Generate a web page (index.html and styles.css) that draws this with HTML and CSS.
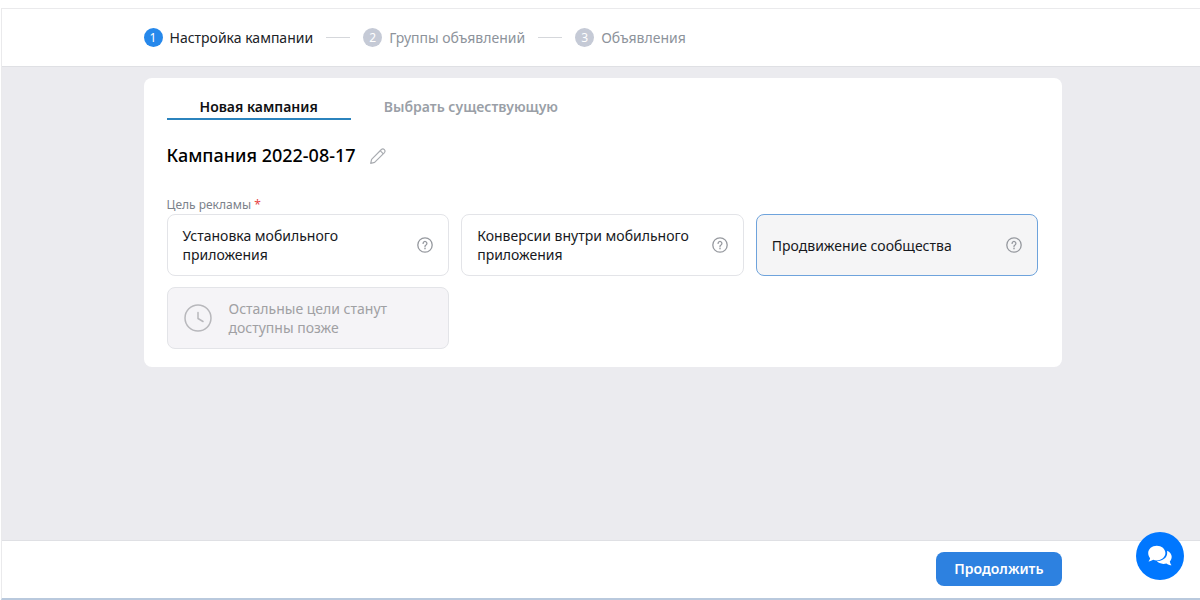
FILE: index.html
```
<!DOCTYPE html>
<html lang="ru">
  <head>
    <meta charset="UTF-8" />
    <meta name="viewport" content="width=device-width, initial-scale=1.0" />
    <title>Новая кампания</title>
    <link rel="stylesheet" href="styles.css">
  </head>
  <body>
    <div class="frame">
      <header class="header">
        <ol class="steps container">
          <li class="step active"><span class="num">1</span>Настройка кампании</li>
          <li class="step"><span class="num">2</span>Группы объявлений</li>
          <li class="step"><span class="num">3</span>Объявления</li>
        </ol>
      </header>

      <main class="main">
        <form class="panel container" id="campaignForm">
          <div class="tabs">
            <button type="button" class="tab active">Новая кампания</button>
            <button type="button" class="tab">Выбрать существующую</button>
          </div>

          <div class="title">
            <h1>Кампания 2022-08-17</h1>
            <button type="button" class="icon-button" aria-label="Переименовать">
              <svg width="18" height="18" viewBox="0 0 18 18" fill="none" stroke="currentColor" stroke-width="1.2" stroke-linejoin="round">
                <path d="M1.700 16.300l.9-3.900L12.400 2.500a2.200 2.200 0 0 1 3.100 3.100L5.600 15.400z" />
                <path d="M11.200 3.700l3.100 3.100" />
              </svg>
            </button>
          </div>

          <fieldset class="goals">
            <legend>Цель рекламы <span class="required">*</span></legend>
            <div class="grid">
              <div class="card">
                <label><input type="radio" name="goal" value="install" />Установка мобильного приложения</label>
                <button type="button" class="icon-button" aria-label="Подсказка">
                  <svg width="16" height="16" viewBox="0 0 16 16" fill="none" stroke="currentColor" stroke-width="1.3" stroke-linecap="round">
                    <circle cx="8" cy="8" r="7.2" />
                    <path d="M6.1 6.4a1.9 1.9 0 1 1 2.9 1.6c-.7.4-1 .7-1 1.4" />
                    <circle cx="8" cy="11.4" r=".3" />
                  </svg>
                </button>
              </div>
              <div class="card">
                <label><input type="radio" name="goal" value="conversion" />Конверсии внутри мобильного приложения</label>
                <button type="button" class="icon-button" aria-label="Подсказка">
                  <svg width="16" height="16" viewBox="0 0 16 16" fill="none" stroke="currentColor" stroke-width="1.3" stroke-linecap="round">
                    <circle cx="8" cy="8" r="7.2" />
                    <path d="M6.1 6.4a1.9 1.9 0 1 1 2.9 1.6c-.7.4-1 .7-1 1.4" />
                    <circle cx="8" cy="11.4" r=".3" />
                  </svg>
                </button>
              </div>
              <div class="card selected">
                <label><input type="radio" name="goal" value="community" checked />Продвижение сообщества</label>
                <button type="button" class="icon-button" aria-label="Подсказка">
                  <svg width="16" height="16" viewBox="0 0 16 16" fill="none" stroke="currentColor" stroke-width="1.3" stroke-linecap="round">
                    <circle cx="8" cy="8" r="7.2" />
                    <path d="M6.1 6.4a1.9 1.9 0 1 1 2.9 1.6c-.7.4-1 .7-1 1.4" />
                    <circle cx="8" cy="11.4" r=".3" />
                  </svg>
                </button>
              </div>
              <div class="card disabled">
                <svg width="30" height="30" viewBox="0 0 30 30" fill="none" stroke="currentColor" stroke-width="1.5" stroke-linecap="round">
                  <circle cx="15" cy="15" r="13" />
                  <path d="M15 9.5v6l5 3" />
                </svg>
                <p>Остальные цели станут доступны позже</p>
              </div>
            </div>
          </fieldset>
        </form>
      </main>

      <footer class="footer">
        <div class="container">
          <button type="submit" form="campaignForm" class="submit">Продолжить</button>
        </div>
      </footer>
    </div>

    <button type="button" class="chat" aria-label="Чат">
      <svg width="24" height="22" viewBox="0 0 24 22" fill="currentColor">
        <path d="M8.8.8c4.8 0 8.6 3.2 8.6 7.3s-3.8 7.3-8.6 7.3c-1.3 0-2.500-.2-3.600-.6-1.300.9-2.900 1.500-4.700 1.600.8-1 1.400-2.100 1.600-3.200C.9 11.900.2 10.100.2 8.100.2 4 4 .8 8.800.8z" />
        <path d="M19 5.700c2.900 1.200 4.700 3.500 4.700 6.100 0 1.800-.7 3.400-1.900 4.700.2 1.300.8 2.500 1.700 3.700-2-.1-3.700-.7-5-1.800-1 .3-2 .5-3.100.5-2.800 0-5.200-1.100-6.500-2.800 5.600-.1 10.300-3.500 10.300-8.200 0-.8-.1-1.500-.2-2.200z" />
      </svg>
    </button>
  </body>
</html>
```
FILE: styles.css
```
* {
  box-sizing: border-box;
}

body {
  font-family: "Noto Sans", "Open Sans", sans-serif;
  font-size: 14px;
  line-height: 19px;
  margin: 0;
  padding-top: 8px;
  min-height: 100vh;
  display: flex;
  flex-direction: column;
  background-color: white;
  color: #17191d;
}

button {
  font: inherit;
  padding: 0;
  border: none;
  background: none;
  color: inherit;
  cursor: pointer;
}

.frame {
  flex: 1;
  display: flex;
  flex-direction: column;
  margin-left: 1px;
  border-top: 1px solid #eaeaec;
  border-left: 1px solid #eaeaec;
  border-bottom: 2px solid #b9c9dd;
}

.container {
  width: calc(100% - 277px);
  max-width: 918px;
  margin: 0 auto;
}

.header {
  padding: 19px 0 19px 3px;
  border-bottom: 1px solid #dfe0e4;
}

.steps {
  display: flex;
  align-items: center;
  padding: 0;
  list-style: none;
}

.step {
  display: flex;
  align-items: center;
  color: #8d939b;
}

.step.active {
  color: #202226;
}

/* dash between steps */
.step + .step::before {
  content: "";
  width: 24px;
  height: 1px;
  margin: 0 13px;
  background-color: #d5d7db;
}

.num {
  width: 19px;
  height: 19px;
  margin-right: 7px;
  border-radius: 50%;
  background-color: #c5cad6;
  color: white;
  font-size: 12px;
  line-height: 20px;
  text-align: center;
}

.active .num {
  background-color: #2688eb;
}

.main {
  flex: 1;
  padding: 11px 0 11px 3px;
  background-color: #ebebef;
}

.panel {
  padding: 19px 23px 18px;
  border-radius: 8px;
  background-color: white;
}

.tabs {
  display: flex;
}

.tab {
  padding: 0 33px 2px;
  border-bottom: 2px solid transparent;
  color: #9a9fa7;
  font-weight: 600;
}

.tab.active {
  border-color: #2b83bd;
  color: #0f1012;
}

.title {
  display: flex;
  align-items: center;
  gap: 13px;
  margin: 23px 0 27px;
}

h1 {
  margin: 0;
  font-size: 18px;
  font-weight: 500;
  line-height: 25px;
  color: black;
}

.icon-button {
  display: flex;
  flex: none;
  color: #96999f;
}

.title .icon-button {
  color: #a9acb1;
}

.goals {
  margin: 0;
  padding: 0;
  border: none;
}

legend {
  padding: 0;
  font-size: 12px;
  line-height: 19px;
  color: #7c828b;
}

.required {
  color: #e64646;
}

.grid {
  display: grid;
  grid-template-columns: repeat(3, 1fr);
  gap: 11px 12px;
}

.card {
  display: flex;
  align-items: center;
  justify-content: space-between;
  gap: 16px;
  min-height: 62px;
  padding: 10px 15px;
  border: 1px solid #e3e4e8;
  border-radius: 8px;
}

.card label {
  flex: 1;
  cursor: pointer;
}

.card input {
  appearance: none;
  position: absolute;
  margin: 0;
}

.card.selected {
  border-color: #6ea3dc;
  background-color: #f5f5f6;
}

.card.disabled {
  justify-content: flex-start;
  gap: 16px;
  background-color: #f5f4f7;
  color: #a0a0a3;
}

.card.disabled svg {
  flex: none;
  color: #b8b8bc;
}

.card p {
  margin: 0;
  max-width: 180px;
}

.footer {
  padding: 11px 0 12px 3px;
  border-top: 1px solid #dfe0e4;
}

.footer .container {
  display: flex;
  justify-content: flex-end;
}

.submit {
  padding: 7px 18px 8px;
  border-radius: 8px;
  background-color: #2d81e0;
  color: white;
  font-weight: 600;
}

.chat {
  position: fixed;
  right: 16px;
  bottom: 20px;
  width: 48px;
  height: 48px;
  display: flex;
  align-items: center;
  justify-content: center;
  border-radius: 50%;
  background-color: #0077ff;
  color: white;
}
```
